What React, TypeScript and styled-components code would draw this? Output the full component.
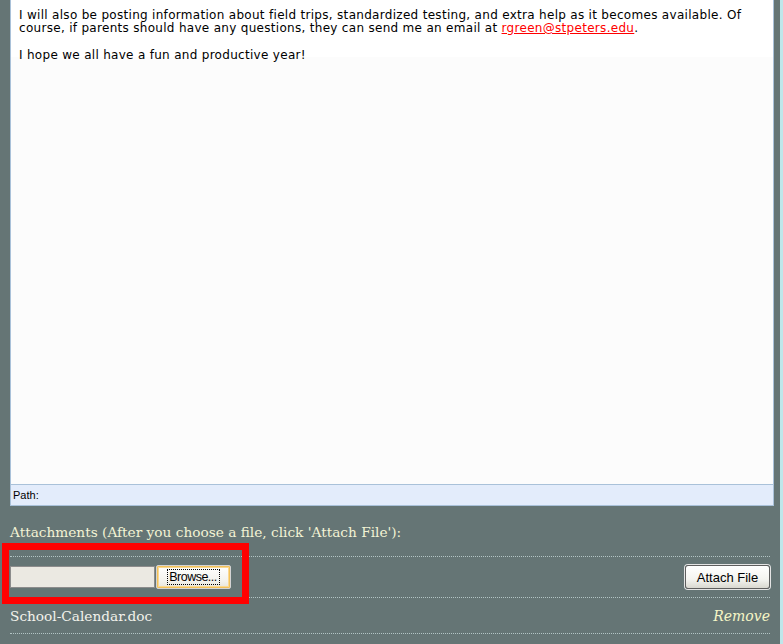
import React from "react";
import styled, { createGlobalStyle } from "styled-components";

const Global = createGlobalStyle`
  html, body { margin: 0; padding: 0; background: #657575; }
  body { width: 783px; height: 644px; overflow: hidden; }
`;

const Page = styled.div`
  position: relative;
  display: flex;
  width: 783px;
  height: 644px;
  background: #657575;
`;

const Main = styled.div`
  width: 780px;
  box-sizing: border-box;
  padding: 0 6px 0 10px;
  display: flex;
  flex-direction: column;
`;

const Strip = styled.div`
  width: 3px;
  background: #bfe6ea;
`;

const Editor = styled.div`
  display: flex;
  flex-direction: column;
  border: 1px solid #a9c1d9;
  border-top: none;
  background: #fff;
`;

const EditorBody = styled.div`
  height: 484px;
  box-sizing: border-box;
  padding: 9px 8px 0 8px;
  background: linear-gradient(#ffffff 0, #ffffff 57px, #fcfcfc 57px);
  font-family: "DejaVu Sans", Verdana, sans-serif;
  font-size: 12px;
  letter-spacing: 0.3px;
  line-height: 13px;
  color: #000;
`;

const Para = styled.p`
  margin: 0 0 14px 0;
`;

const MailLink = styled.a`
  color: #ff0000;
  text-decoration: underline;
`;

const PathBar = styled.div`
  height: 20px;
  border-top: 1px solid #a9c1d9;
  background: #e3ecfb;
  padding-left: 2px;
  display: flex;
  align-items: center;
  font-family: "Liberation Sans", Tahoma, sans-serif;
  font-size: 11px;
  color: #000;
`;

const Attachments = styled.div`
  margin-right: 4px;
  display: flex;
  flex-direction: column;
`;

const Label = styled.div`
  padding: 18px 0 16px 0;
  font-family: "DejaVu Serif", Georgia, serif;
  font-size: 13.7px;
  line-height: 16px;
  color: #f3f3d4;
`;

const List = styled.div`
  border-top: 1px dotted #b2c4c4;
  display: flex;
  flex-direction: column;
`;

const Row = styled.div<{ $h: number }>`
  height: ${(p) => p.$h}px;
  border-bottom: 1px dotted #b2c4c4;
  display: flex;
  align-items: center;
  justify-content: space-between;
`;

const FilePicker = styled.div`
  display: flex;
  align-items: center;
`;

const FileInput = styled.div`
  width: 145px;
  height: 22px;
  box-sizing: border-box;
  border: 1px solid #8c8c8c;
  background: #ebe9e2;
`;

const BrowseButton = styled.button`
  width: 75px;
  height: 24px;
  margin-left: 1px;
  padding: 0;
  box-sizing: border-box;
  border: 1px solid #d4d4d4;
  border-radius: 2px;
  background: linear-gradient(#ffffff, #f3f2ec 70%, #e6e4da);
  box-shadow: inset 0 0 0 1px #f2c15a, inset 0 0 0 2px #fbd992;
  font-family: "Liberation Sans", Tahoma, sans-serif;
  font-size: 12.5px;
  letter-spacing: -0.5px;
  color: #000;
  display: flex;
  align-items: center;
  justify-content: center;
`;

const FocusText = styled.span`
  outline: 1px dotted #000;
  padding: 0 2px 0 1px;
  line-height: 14px;
`;

const AttachButton = styled.button`
  width: 85px;
  height: 24px;
  padding: 0;
  box-sizing: border-box;
  border: 1px solid #5e5e5e;
  border-radius: 3px;
  box-shadow: 0 0 0 1px #e4e4e4;
  background: linear-gradient(#ffffff, #f4f4f0 60%, #d9d8d0);
  font-family: "Liberation Sans", Tahoma, sans-serif;
  font-size: 13px;
  color: #000;
`;

const FileName = styled.span`
  font-family: "DejaVu Serif", Georgia, serif;
  font-size: 13.7px;
  line-height: 16px;
  color: #f3f3ec;
`;

const RemoveLink = styled.span`
  font-family: "DejaVu Serif", Georgia, serif;
  font-style: italic;
  font-size: 14px;
  line-height: 16px;
  color: #f6f6c6;
`;

const Highlight = styled.div`
  position: absolute;
  left: 2px;
  top: 543px;
  width: 247px;
  height: 61px;
  box-sizing: border-box;
  border: 7px solid #ff0000;
  pointer-events: none;
`;

export default function App() {
  return (
    <>
      <Global />
      <Page>
        <Main>
          <Editor>
            <EditorBody>
              <Para>
                I will also be posting information about field trips, standardized testing, and extra help as it becomes available. Of
                <br />
                course, if parents should have any questions, they can send me an email at{" "}
                <MailLink href="#">rgreen@stpeters.edu</MailLink>.
              </Para>
              <Para>I hope we all have a fun and productive year!</Para>
            </EditorBody>
            <PathBar>Path:</PathBar>
          </Editor>
          <Attachments>
            <Label>Attachments (After you choose a file, click 'Attach File'):</Label>
            <List>
              <Row $h={40}>
                <FilePicker>
                  <FileInput />
                  <BrowseButton>
                    <FocusText>Browse...</FocusText>
                  </BrowseButton>
                </FilePicker>
                <AttachButton>Attach File</AttachButton>
              </Row>
              <Row $h={35}>
                <FileName>School-Calendar.doc</FileName>
                <RemoveLink>Remove</RemoveLink>
              </Row>
            </List>
          </Attachments>
        </Main>
        <Strip />
        <Highlight />
      </Page>
    </>
  );
}
